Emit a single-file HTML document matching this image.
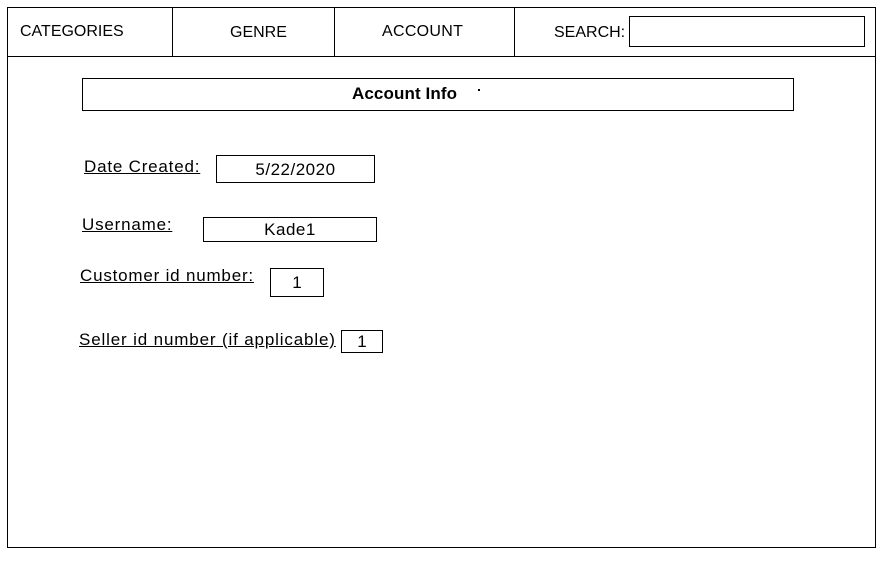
<!DOCTYPE html>
<html><head><meta charset="utf-8"><style>
body{margin:0;width:893px;height:561px;background:#fff;position:relative;font-family:"Liberation Sans",sans-serif;color:#000;overflow:hidden}
div{position:absolute;box-sizing:border-box}
.b{border:1px solid #000}
.t{font-size:16px;white-space:nowrap;line-height:20px}
.u{text-decoration:underline;letter-spacing:0.8px}
.c{text-align:center}
</style></head><body>
<div class="b" style="left:7px;top:7px;width:869px;height:541px"></div>
<div style="left:7px;top:56px;width:869px;height:1px;background:#000"></div>
<div style="left:172px;top:7px;width:1px;height:50px;background:#000"></div>
<div style="left:334px;top:7px;width:1px;height:50px;background:#000"></div>
<div style="left:514px;top:7px;width:1px;height:50px;background:#000"></div>
<div class="t" style="left:20px;top:22px">CATEGORIES</div>
<div class="t" style="left:230px;top:23px">GENRE</div>
<div class="t" style="left:382px;top:22px;letter-spacing:0.3px">ACCOUNT</div>
<div class="t" style="left:554px;top:23px">SEARCH:</div>
<div class="b" style="left:629px;top:16px;width:236px;height:31px"></div>
<div class="b" style="left:82px;top:78px;width:712px;height:33px"></div>
<div class="t" style="left:352px;top:84px;font-weight:bold;font-size:17px;letter-spacing:0.1px">Account Info</div>
<div style="left:478px;top:89px;width:2px;height:2px;background:#000"></div>
<div class="t u" style="left:84px;top:157px;font-size:17px">Date Created:</div>
<div class="b t c" style="left:216px;top:155px;width:159px;height:28px;line-height:27px;font-size:17px;letter-spacing:0.5px">5/22/2020</div>
<div class="t u" style="left:82px;top:215px;font-size:17px">Username:</div>
<div class="b t c" style="left:203px;top:217px;width:174px;height:25px;line-height:24px;font-size:17px;letter-spacing:0.5px">Kade1</div>
<div class="t u" style="left:80px;top:266px;font-size:17px">Customer id number:</div>
<div class="b t c" style="left:270px;top:268px;width:54px;height:29px;line-height:28px;font-size:17px">1</div>
<div class="t u" style="left:79px;top:330px;font-size:17px;letter-spacing:0.85px">Seller id number (if applicable)</div>
<div class="b t c" style="left:341px;top:330px;width:42px;height:23px;line-height:22px;font-size:17px">1</div>
</body></html>
